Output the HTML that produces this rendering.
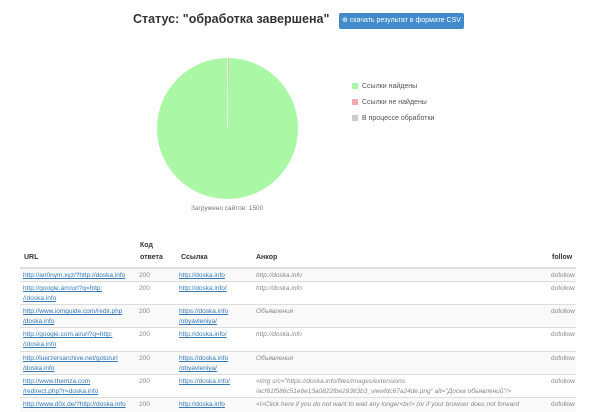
<!DOCTYPE html>
<html><head><meta charset="utf-8"><style>
body{margin:0;width:600px;height:408px;overflow:hidden;background:#fff;font-family:"Liberation Sans",sans-serif;position:relative}
.a{position:absolute}
h1{position:absolute;left:133px;top:12px;margin:0;font-size:12.5px;font-weight:bold;color:#333;white-space:nowrap}
.btn{position:absolute;left:339px;top:13px;width:125px;height:16px;background:#428bca;border-radius:2px;color:#fff;font-size:7px;line-height:16px;text-align:center;white-space:nowrap}
.lg{position:absolute;left:352px;font-size:7px;color:#555;white-space:nowrap}
.lg i{display:inline-block;width:6px;height:6px;margin-right:4px;vertical-align:-1px}
.row{position:absolute;left:20px;width:556px;border-top:1px solid #ddd;font-size:6.5px;line-height:10px;color:#888}
.row.s{background:#f9f9f9}
.row div{position:absolute;top:2px;white-space:nowrap}
.u{color:#337ab7;text-decoration:underline}
.c1{left:3px}.c2{left:119px}.c3{left:159px}.c4{left:236px;font-style:italic}.c5{left:531px}
.hd{position:absolute;font-size:7px;font-weight:bold;color:#333;line-height:12px}
</style></head><body>
<h1>Статус: "обработка завершена"</h1>
<div class="btn">⊕ скачать результат в формате CSV</div>
<svg class="a" style="left:0;top:0" width="600" height="230">
<circle cx="227.5" cy="128.5" r="70.5" fill="#aaf7a6"/>
<path d="M227.5 128.5 L227.5 58 L228.6 58 Z" fill="#f5a9a9"/>
<line x1="227.5" y1="58" x2="227.5" y2="128.5" stroke="#fff" stroke-width="0.6"/>
</svg>
<div class="a" style="left:191px;top:205px;font-size:6.5px;color:#777">Загружено сайтов: 1500</div>
<div class="lg" style="top:83px"><i style="background:#aaf7a6"></i>Ссылки найдены</div>
<div class="lg" style="top:99px"><i style="background:#f5a9a9"></i>Ссылки не найдены</div>
<div class="lg" style="top:115px"><i style="background:#ccc"></i>В процессе обработки</div>
<div class="hd" style="left:24px;top:252px">URL</div>
<div class="hd" style="left:140px;top:240px">Код<br>ответа</div>
<div class="hd" style="left:181px;top:252px">Ссылка</div>
<div class="hd" style="left:256px;top:252px">Анкор</div>
<div class="hd" style="left:552px;top:252px">follow</div>
<div class="row s" style="top:267px;height:14px;border-top:2px solid #ddd"><div class="c1 u">http://an0nym.xyz/?http://doska.info</div><div class="c2">200</div><div class="c3 u">http://doska.info</div><div class="c4">http://doska.info</div><div class="c5">dofollow</div></div>
<div class="row" style="top:281px;height:22px"><div class="c1 u">http://google.am/url?q=http:<br>//doska.info</div><div class="c2">200</div><div class="c3 u">http://doska.info/</div><div class="c4">http://doska.info</div><div class="c5">dofollow</div></div>
<div class="row s" style="top:304px;height:22px"><div class="c1 u">http://www.iomguide.com/redir.php<br>/doska.info</div><div class="c2">200</div><div class="c3 u">https://doska.info<br>/obyavleniya/</div><div class="c4">Объявления</div><div class="c5">dofollow</div></div>
<div class="row" style="top:327px;height:23px"><div class="c1 u">http://google.com.ai/url?q=http:<br>//doska.info</div><div class="c2">200</div><div class="c3 u">http://doska.info/</div><div class="c4">http://doska.info</div><div class="c5">dofollow</div></div>
<div class="row s" style="top:351px;height:22px"><div class="c1 u">http://luerzersarchive.net/goto/url<br>/doska.info</div><div class="c2">200</div><div class="c3 u">https://doska.info<br>/obyavleniya/</div><div class="c4">Объявления</div><div class="c5">dofollow</div></div>
<div class="row" style="top:374px;height:22px"><div class="c1 u">http://www.themza.com<br>/redirect.php?r=doska.info</div><div class="c2">200</div><div class="c3 u">https://doska.info/</div><div class="c4">&lt;img src="https://doska.info/files/images/extensions<br>/acf61f586c51e6e13a0822fbe29363b3_viewfdc67a24de.png" alt="Доска объявлений"/&gt;</div><div class="c5">dofollow</div></div>
<div class="row s" style="top:397px;height:14px"><div class="c1 u">http://www.d0x.de/?http://doska.info</div><div class="c2">200</div><div class="c3 u">http://doska.info</div><div class="c4">&lt;i&gt;Click here if you do not want to wait any longer&lt;br/&gt; (or if your browser does not forward</div><div class="c5">dofollow</div></div>
</body></html>
